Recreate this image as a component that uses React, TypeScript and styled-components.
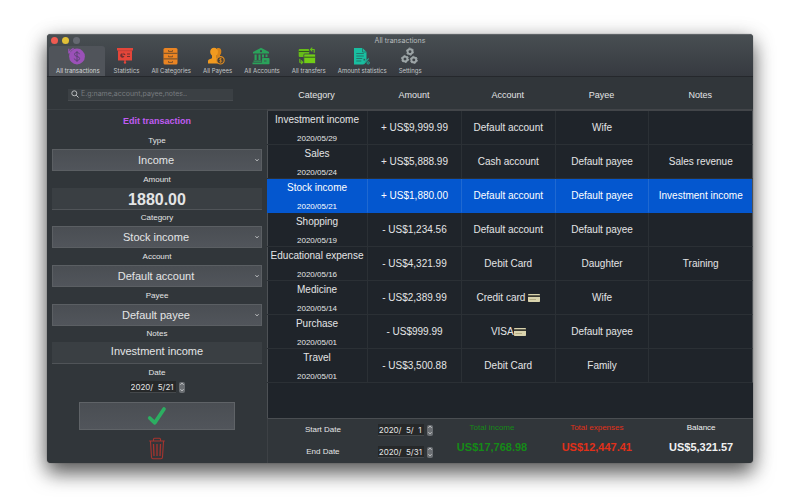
import React, { useId, useState } from "react";
import styled, { createGlobalStyle, css } from "styled-components";

const sans = `"Liberation Sans", Arial, sans-serif`;
const system = `Inter, Roboto, sans-serif`;

const GlobalStyle = createGlobalStyle`
  * { box-sizing: border-box; }
  body { margin: 0; background: #fff; color: #e4e5e6; font-family: ${sans}; }
  button, input, select { font: inherit; color: inherit; margin: 0; padding: 0; border: 0; border-radius: 0; outline: none; }
  svg { display: block; flex: none; }
`;

const Page = styled.div`
  min-height: 100vh;
  display: flex;
  padding: 34px 47px 37px;
`;

const Window = styled.main`
  flex: 1;
  min-width: 0;
  display: flex;
  flex-direction: column;
  background: #31363a;
  border-radius: 4px;
  overflow: hidden;
  box-shadow: 0 0 1px rgba(0, 0, 0, 0.6), 0 10px 20px rgba(0, 0, 0, 0.6), 0 3px 22px rgba(0, 0, 0, 0.18);
`;

const TopBar = styled.header`
  background: linear-gradient(#484e52, #363a40);
  border-top: 1px solid #5f6468;
  border-bottom: 1px solid #25282c;
  font-family: ${system};
`;

const TitleBar = styled.div`
  display: grid;
  grid-template-columns: 1fr auto 1fr;
  align-items: center;
  height: 11px;
  padding: 0 4px;
`;

const Lights = styled.div`
  display: flex;
  gap: 4px;
`;

const Light = styled.button<{ $color: string }>`
  width: 7px;
  height: 7px;
  border-radius: 50%;
  background: ${(p) => p.$color};
`;

const Title = styled.h1`
  margin: 0;
  font-size: 7px;
  font-weight: 400;
  line-height: 11px;
  color: #b9bcbe;
`;

const Toolbar = styled.nav`
  display: flex;
  height: 30px;
  padding-left: 2px;
`;

const ToolButton = styled.button<{ $active?: boolean }>`
  display: flex;
  flex-direction: column;
  align-items: center;
  gap: 1px;
  padding: 1px 5px 0 7px;
  border-radius: 3px 3px 0 0;
  background: ${(p) => (p.$active ? "#50545a" : "transparent")};
  font-size: 6px;
  line-height: 9px;
  color: ${(p) => (p.$active ? "#d5d7d9" : "#c3c6c8")};

  &:first-child { margin-right: 2px; }
  svg { margin-right: 3px; }
`;

const Body = styled.div`
  flex: 1;
  display: grid;
  grid-template-columns: 220fr 486fr;
`;

const Side = styled.aside`
  display: flex;
  flex-direction: column;
`;

const SearchBand = styled.div`
  display: flex;
  align-items: center;
  height: 32px;
  padding: 3px 34px 0 21px;
`;

const SearchBox = styled.label`
  flex: 1;
  display: flex;
  align-items: center;
  gap: 2px;
  height: 12px;
  padding-left: 3px;
  background: #3b4044;
  border-bottom: 1px solid #474b4f;

  input {
    flex: 1;
    min-width: 0;
    background: transparent;
    font-family: ${system};
    font-size: 7px;
    line-height: 10px;
  }
  input::placeholder { color: #777b7f; opacity: 1; }
`;

const Form = styled.form`
  flex: 1;
  display: flex;
  flex-direction: column;
  align-items: center;
  padding: 0 5px 3px;
  border-top: 1px solid #3b4044;
`;

const FormTitle = styled.h2`
  margin: 0;
  font-size: 9px;
  font-weight: 700;
  line-height: 23px;
  color: #c05cf2;
`;

const Fields = styled.div`
  flex: 1;
  align-self: stretch;
  display: grid;
  grid-auto-rows: 1fr;
`;

const Field = styled.div`
  display: flex;
  flex-direction: column;
`;

const Label = styled.label`
  font-size: 8px;
  line-height: 16px;
  text-align: center;
`;

const SelectBox = styled.div`
  display: grid;
  align-items: center;
  height: 22px;

  select, svg { grid-area: 1 / 1; }
  select {
    appearance: none;
    width: 100%;
    height: 22px;
    border: 1px solid #5b5f63;
    background: linear-gradient(#4a4e53, #51555b);
    font-size: 11px;
    text-align: center;
    text-align-last: center;
    padding: 0 6px 0 4px;
  }
  svg { justify-self: end; margin-right: 3px; pointer-events: none; }
`;

const TextInput = styled.input<{ $amount?: boolean }>`
  width: 100%;
  height: 22px;
  padding-bottom: 3px;
  background: #3a3f43;
  border-bottom: 1px solid #505458;
  font-size: 11px;
  text-align: center;
  ${(p) =>
    p.$amount &&
    css`
      padding: 3px 0 0;
      font-size: 16px;
      font-weight: 700;
    `}
`;

const DateBox = styled.div`
  display: flex;
  align-items: center;
  gap: 3px;

  input {
    width: 46px;
    height: 12px;
    padding-left: 1px;
    background: #262829;
    border-bottom: 1px solid #44484b;
    font-family: ${system};
    font-size: 8px;
    line-height: 11px;
    white-space: pre;
  }
`;

const Stepper = styled.div`
  display: flex;
  flex-direction: column;
  width: 6px;
  height: 11px;
  border-radius: 2px;
  background: #6a6e72;
  overflow: hidden;

  button {
    flex: 1;
    display: grid;
    place-items: center;
    background: transparent;
  }
`;

const ConfirmButton = styled.button`
  display: grid;
  place-items: center;
  width: 74%;
  height: 28px;
  margin: 9px 0 7px;
  background: linear-gradient(#4a4e53, #51555b);
  border: 1px solid #5f6367;
`;

const DeleteButton = styled.button`
  background: transparent;
`;

const Content = styled.section`
  display: flex;
  flex-direction: column;
  min-width: 0;
`;

const TableArea = styled.div`
  flex: 1;
  background: linear-gradient(#4d5155, #4d5155) 0 0 / 1px 100% no-repeat #1f242a;
`;

const Table = styled.table`
  width: 100%;
  table-layout: fixed;
  border-collapse: separate;
  border-spacing: 0;
`;

const HeadCell = styled.th<{ $share: number }>`
  width: ${(p) => p.$share}%;
  height: 34px;
  padding: 3px 2px 0 0;
  background: #31363a;
  border-bottom: 2px solid #424549;
  font-size: 9px;
  font-weight: 400;
`;

const Row = styled.tr<{ $selected: boolean }>`
  cursor: default;
  background: ${(p) => (p.$selected ? "#0457cf" : "transparent")};
  color: ${(p) => (p.$selected ? "#fff" : "inherit")};

  td {
    height: 34px;
    padding: 0;
    font-size: 10px;
    line-height: 12px;
    text-align: center;
    white-space: nowrap;
    border-right: 1px solid ${(p) => (p.$selected ? "#1f69d2" : "#2b3035")};
    border-bottom: 1px solid ${(p) => (p.$selected ? "#0457cf" : "#2b3035")};
  }
  td:first-child { padding-top: 2px; }
  td:last-child { border-right-color: #4d5155; }
  td svg { display: inline-block; vertical-align: -1px; }
`;

const DateLine = styled.time`
  display: block;
  margin-top: 8px;
  font-size: 8px;
  line-height: 10px;
`;

const Footer = styled.footer`
  display: grid;
  grid-template-columns: 172fr 105fr 105fr 104fr;
  border-top: 1px solid #4a4e52;
  border-left: 1px solid #3d4145;
`;

const RangeRow = styled.div`
  display: grid;
  grid-template-columns: 110fr 62fr;
  align-items: center;
  height: 22px;
`;

const Total = styled.div<{ $color: string }>`
  display: flex;
  flex-direction: column;
  align-items: center;
  padding-top: 3px;
  gap: 4px;
  color: ${(p) => p.$color};
  font-size: 8px;
  line-height: 12px;
  white-space: nowrap;

  strong {
    font-size: 11px;
    line-height: 18px;
  }
`;

/* ---------- icons ---------- */

const Glyph = ({ children }: { children: React.ReactNode }) => (
  <svg width="20" height="18" viewBox="0 0 20 18" aria-hidden="true">{children}</svg>
);

const CoinIcon = () => (
  <Glyph>
    <circle cx="11" cy="9.5" r="7.9" fill="#9b51b8" />
    <path d="M2.800 1.800v4h4M3.200 5.400A8.400 8.400 0 0 1 7.600 1.400" fill="none" stroke="#9b51b8" strokeWidth="1.200" />
    <path d="M13.500 7.200c-.3-1.100-1.200-1.700-2.500-1.700-1.500 0-2.500.7-2.500 1.900 0 2.700 5.100 1.400 5.100 4.100 0 1.200-1.100 1.900-2.600 1.900s-2.500-.7-2.700-1.900M11 4v11" fill="none" stroke="#5c4374" strokeWidth="1" />
  </Glyph>
);

const BoardIcon = () => (
  <Glyph>
    <path d="M2 1h16v2.500H2zM3 3.500h14v10H3zM9.300 13h1.400v2H9.300z" fill="#e4463a" />
    <circle cx="10" cy="15.600" r="1.200" fill="#e4463a" />
    <path d="M3 3.700h14" stroke="#a33a36" strokeWidth=".5" />
    <path d="M7.500 6.300a2.200 2.200 0 1 0 2 2.800h-2zM8.500 5.500v2.400h2.200" fill="#6f2f30" />
    <path d="M12 7h3M12 9.500h3" stroke="#6f2f30" />
  </Glyph>
);

const CabinetIcon = () => (
  <Glyph>
    <rect x="3.500" y="1" width="14" height="16.500" rx="1.500" fill="#ea8423" />
    <path d="M3.500 6.300h14M3.500 11.900h14" stroke="#5c4630" strokeWidth=".9" />
    <path d="M8.500 3.200v1.200h4V3.200M8.500 8.600v1.200h4V8.600M8.500 14.200v1.200h4v-1.200" fill="none" stroke="#6f4a28" strokeWidth=".9" />
  </Glyph>
);

const PeopleIcon = () => (
  <Glyph>
    <path d="M11 1.300c2.800-1 4.600.8 4.300 3.700-.1 1.700-.8 2.600-1.300 3.300l-.1 1.400 3 1.500v4H10z" fill="#d98317" />
    <path d="M8 .8c2.500 0 4 1.700 4 4 0 1.700-.7 2.900-1.500 3.700v2.700l3 2V16.500H2v-2.500c0-1.300 1-1.700 4-2.800V8.500C5 7.700 4.200 6.500 4.200 4.800c0-2.300 1.400-4 3.800-4z" fill="#f29a1f" />
    <circle cx="14.500" cy="13.300" r="3.700" fill="#4a4136" stroke="#e28d21" strokeWidth="1.100" />
    <path d="M15.800 12c-.7-.8-2.400-.6-2.400.4s2.400.7 2.400 1.800-1.800 1.200-2.600.3M14.500 11v4.700" fill="none" stroke="#e28d21" strokeWidth=".7" />
  </Glyph>
);

const BankIcon = () => (
  <Glyph>
    <path d="M10 .8 18 5v1.600H2V5zM3.500 7.500h2.200V13H3.500zM7.500 7.500h2V13h-2zM11 7.500h2v3h-2zM14.500 7.500h2V10h-2zM2.500 13.500h8v1.200h-8zM1.500 15.600h10v1.600h-10z" fill="#2aa25a" />
    <circle cx="10" cy="4.200" r="1.100" fill="#40464b" />
    <rect x="11" y="11" width="7.500" height="6.200" rx=".8" fill="#2aa25a" />
    <path d="M13 14h2.500" stroke="#40464b" strokeWidth=".8" />
  </Glyph>
);

const TransferIcon = () => (
  <Glyph>
    <rect x="1.700" y="2" width="10.500" height="8" rx="1" fill="#66bd18" />
    <path d="M1.700 4.500h10.500" stroke="#345423" strokeWidth="1" />
    <rect x="6.800" y="7" width="11.700" height="9.500" rx="1" fill="#72cd16" stroke="#40464b" strokeWidth=".8" />
    <path d="M7.200 10.200h10.900" stroke="#345423" strokeWidth="1" />
    <path d="M14 2.500h3.200v3.300M15.300.7l-1.800 1.800 1.800 1.800M5.500 15.200H2.800v-3.500M4 13.400l1.800 1.800L4 17" fill="none" stroke="#66bd18" strokeWidth="1.100" />
  </Glyph>
);

const ReportIcon = () => (
  <Glyph>
    <path d="M3 1h8.500l4 4v8l-3 4.500H3z" fill="#19bea0" />
    <path d="M11.500 1v4h4" fill="none" stroke="#27695f" strokeWidth=".8" />
    <path d="M5.300 6.500h7.500M5.300 9h7.500M5.300 11.500h6M5.300 14h5" stroke="#25665e" strokeWidth=".8" />
    <path d="m12.700 17 5-5.500" stroke="#19bea0" strokeWidth="1.100" />
    <circle cx="13.300" cy="12.700" r="1.200" fill="#3b5055" stroke="#19bea0" strokeWidth=".8" />
    <circle cx="17.200" cy="15.900" r="1.200" fill="#3b5055" stroke="#19bea0" strokeWidth=".8" />
  </Glyph>
);

const Gear = ({ x, y }: { x: number; y: number }) => (
  <g transform={`translate(${x} ${y})`} fill="none" stroke="#9da5a7">
    <circle r="2.400" strokeWidth="1.900" />
    <circle r="3.600" strokeWidth="1" strokeDasharray="1.900 1.870" />
  </g>
);

const GearsIcon = () => (
  <Glyph>
    <Gear x={11} y={4.600} />
    <Gear x={6} y={12} />
    <Gear x={14.800} y={12.900} />
  </Glyph>
);

const SearchIcon = () => (
  <svg width="8" height="8" viewBox="0 0 8 8" fill="none" stroke="#c4c7c9" aria-hidden="true">
    <circle cx="3.300" cy="3.300" r="2.500" strokeWidth=".9" />
    <path d="m5.200 5.200 2.300 2.300" />
  </svg>
);

const Chevron = ({ up }: { up?: boolean }) => (
  <svg width="4" height="4" viewBox="0 0 4 4" fill="none" stroke="#dfe0e1" strokeWidth=".9" aria-hidden="true">
    <path d={up ? "M.5 2.700 2 1.200l1.500 1.500" : "M.5 1.300 2 2.800l1.500-1.500"} />
  </svg>
);

const CheckIcon = () => (
  <svg width="20" height="20" viewBox="0 0 20 20" aria-hidden="true">
    <path d="M2.700 12 7.800 16.800 17 3" fill="none" stroke="#2cae61" strokeWidth="3.700" strokeLinejoin="round" strokeLinecap="round" />
  </svg>
);

const TrashIcon = () => (
  <svg width="18" height="23" viewBox="0 0 18 23" fill="none" stroke="#a5342f" aria-hidden="true">
    <path d="M1.200 4h15.600M5.500 3.700V2.200q0-1 1-1h5q1 0 1 1v1.500M2.500 4.500l1 15.500q.1 1.800 1.500 1.800h8q1.400 0 1.500-1.800l1-15.500" strokeWidth="1.100" />
    <path d="m5.500 7 .5 12M9 7v12M12.500 7 12 19" strokeWidth="1.300" />
  </svg>
);

const CardIcon = () => (
  <svg width="12" height="8" viewBox="0 0 12 8" role="img" aria-label="card">
    <rect width="12" height="8" rx=".7" fill="#d9d3ad" />
    <path d="M0 1.200h12v1.800H0z" fill="#39382f" />
    <path d="M1.500 5.500H8" stroke="#b5ad84" />
  </svg>
);

/* ---------- data ---------- */

const tools: [string, React.ComponentType][] = [
  ["All transactions", CoinIcon],
  ["Statistics", BoardIcon],
  ["All Categories", CabinetIcon],
  ["All Payees", PeopleIcon],
  ["All Accounts", BankIcon],
  ["All transfers", TransferIcon],
  ["Amount statistics", ReportIcon],
  ["Settings", GearsIcon],
];

const columns: [string, number][] = [
  ["Category", 20.8],
  ["Amount", 19.3],
  ["Account", 19.3],
  ["Payee", 19.3],
  ["Notes", 21.3],
];

type Transaction = {
  category: string;
  date: string;
  amount: string;
  account: string;
  card?: boolean;
  payee: string;
  notes?: string;
};

const transactions: Transaction[] = [
  { category: "Investment income", date: "2020/05/29", amount: "+ US$9,999.99", account: "Default account", payee: "Wife" },
  { category: "Sales", date: "2020/05/24", amount: "+ US$5,888.99", account: "Cash account", payee: "Default payee", notes: "Sales revenue" },
  { category: "Stock income", date: "2020/05/21", amount: "+ US$1,880.00", account: "Default account", payee: "Default payee", notes: "Investment income" },
  { category: "Shopping", date: "2020/05/19", amount: "- US$1,234.56", account: "Default account", payee: "Default payee" },
  { category: "Educational expense", date: "2020/05/16", amount: "- US$4,321.99", account: "Debit Card", payee: "Daughter", notes: "Training" },
  { category: "Medicine", date: "2020/05/14", amount: "- US$2,389.99", account: "Credit card ", card: true, payee: "Wife" },
  { category: "Purchase", date: "2020/05/01", amount: "- US$999.99", account: "VISA", card: true, payee: "Default payee" },
  { category: "Travel", date: "2020/05/01", amount: "- US$3,500.88", account: "Debit Card", payee: "Family" },
];

/* ---------- parts ---------- */

const SelectField = ({ label, value }: { label: string; value: string }) => {
  const id = useId();
  return (
    <Field>
      <Label htmlFor={id}>{label}</Label>
      <SelectBox>
        <select id={id} defaultValue={value}>
          <option>{value}</option>
        </select>
        <Chevron />
      </SelectBox>
    </Field>
  );
};

const TextField = ({ label, value, amount }: { label: string; value: string; amount?: boolean }) => {
  const id = useId();
  return (
    <Field>
      <Label htmlFor={id}>{label}</Label>
      <TextInput id={id} defaultValue={value} $amount={amount} />
    </Field>
  );
};

const DatePicker = ({ id, value }: { id: string; value: string }) => (
  <DateBox>
    <input id={id} defaultValue={value} />
    <Stepper>
      <button type="button" aria-label="Later"><Chevron up /></button>
      <button type="button" aria-label="Earlier"><Chevron /></button>
    </Stepper>
  </DateBox>
);

export default function App() {
  const [selected, setSelected] = useState(2);

  return (
    <>
      <GlobalStyle />
      <Page>
        <Window>
          <TopBar>
            <TitleBar>
              <Lights>
                <Light $color="#f05b51" aria-label="Close" />
                <Light $color="#e1c037" aria-label="Minimize" />
                <Light $color="#656971" aria-label="Zoom" />
              </Lights>
              <Title>All transactions</Title>
            </TitleBar>
            <Toolbar>
              {tools.map(([name, Icon], i) => (
                <ToolButton key={name} type="button" $active={i === 0}>
                  <Icon />
                  {name}
                </ToolButton>
              ))}
            </Toolbar>
          </TopBar>
          <Body>
            <Side>
              <SearchBand>
                <SearchBox>
                  <SearchIcon />
                  <input type="text" aria-label="Search" placeholder="E.g:name,account,payee,notes.." />
                </SearchBox>
              </SearchBand>
              <Form onSubmit={(e) => e.preventDefault()}>
                <FormTitle>Edit transaction</FormTitle>
                <Fields>
                  <SelectField label="Type" value="Income" />
                  <TextField label="Amount" value="1880.00" amount />
                  <SelectField label="Category" value="Stock income" />
                  <SelectField label="Account" value="Default account" />
                  <SelectField label="Payee" value="Default payee" />
                  <TextField label="Notes" value="Investment income" />
                </Fields>
                <Label htmlFor="entry-date">Date</Label>
                <DatePicker id="entry-date" value="2020/  5/21" />
                <ConfirmButton type="submit" aria-label="Save"><CheckIcon /></ConfirmButton>
                <DeleteButton type="button" aria-label="Delete"><TrashIcon /></DeleteButton>
              </Form>
            </Side>
            <Content>
              <TableArea>
                <Table>
                  <thead>
                    <tr>
                      {columns.map(([name, share]) => (
                        <HeadCell key={name} scope="col" $share={share}>{name}</HeadCell>
                      ))}
                    </tr>
                  </thead>
                  <tbody>
                    {transactions.map((t, i) => (
                      <Row key={i} $selected={i === selected} onClick={() => setSelected(i)}>
                        <td>
                          {t.category}
                          <DateLine>{t.date}</DateLine>
                        </td>
                        <td>{t.amount}</td>
                        <td>{t.account}{t.card && <CardIcon />}</td>
                        <td>{t.payee}</td>
                        <td>{t.notes}</td>
                      </Row>
                    ))}
                  </tbody>
                </Table>
              </TableArea>
              <Footer>
                <div>
                  <RangeRow>
                    <Label htmlFor="start-date">Start Date</Label>
                    <DatePicker id="start-date" value="2020/  5/  1" />
                  </RangeRow>
                  <RangeRow>
                    <Label htmlFor="end-date">End Date</Label>
                    <DatePicker id="end-date" value="2020/  5/31" />
                  </RangeRow>
                </div>
                <Total $color="#158a17">Total income<strong>US$17,768.98</strong></Total>
                <Total $color="#e03019">Total expenses<strong>US$12,447.41</strong></Total>
                <Total $color="#f0f1f1">Balance<strong>US$5,321.57</strong></Total>
              </Footer>
            </Content>
          </Body>
        </Window>
      </Page>
    </>
  );
}
